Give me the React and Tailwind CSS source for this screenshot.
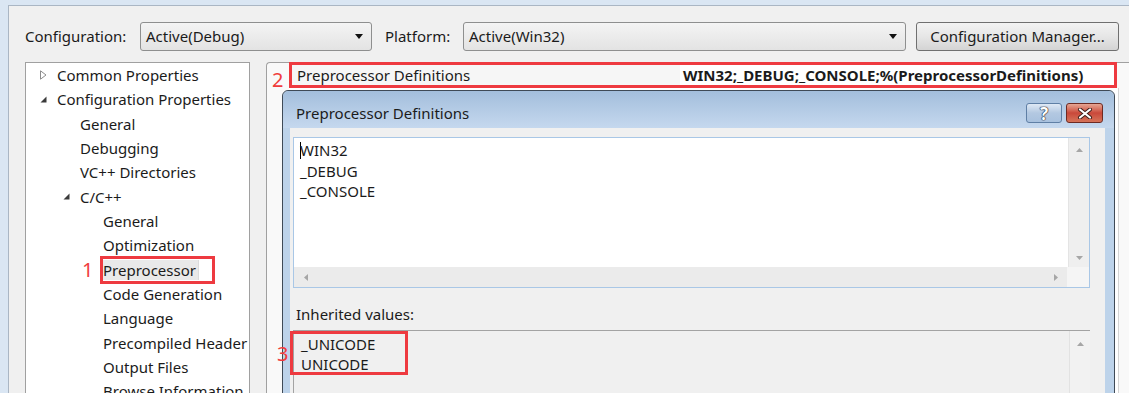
import React from 'react';

const tree = [
  { t: 'Common Properties', lvl: 0, icon: 'closed' },
  { t: 'Configuration Properties', lvl: 0, icon: 'open' },
  { t: 'General', lvl: 1 },
  { t: 'Debugging', lvl: 1 },
  { t: 'VC++ Directories', lvl: 1 },
  { t: 'C/C++', lvl: 1, icon: 'open' },
  { t: 'General', lvl: 2 },
  { t: 'Optimization', lvl: 2 },
  { t: 'Preprocessor', lvl: 2, sel: true },
  { t: 'Code Generation', lvl: 2 },
  { t: 'Language', lvl: 2 },
  { t: 'Precompiled Header', lvl: 2 },
  { t: 'Output Files', lvl: 2 },
  { t: 'Browse Information', lvl: 2 },
];

const indent = ['pl-[8px]', 'pl-[31px]', 'pl-[54px]'];

const Arrow = ({ dir }) => {
  const d = {
    up: 'M0 4 L3.5 0 L7 4 Z',
    down: 'M0 0 L7 0 L3.5 4 Z',
    left: 'M4 0 L4 7 L0 3.5 Z',
    right: 'M0 0 L4 3.5 L0 7 Z',
  }[dir];
  const vert = dir === 'up' || dir === 'down';
  return (
    <svg width={vert ? 7 : 4} height={vert ? 4 : 7} viewBox={vert ? '0 0 7 4' : '0 0 4 7'}>
      <path d={d} fill="#a6a6a6" />
    </svg>
  );
};

const Combo = ({ value, width }) => (
  <div
    className={`${width} h-[29px] flex items-center justify-between pl-[5px] pr-[8px] rounded-[3px] border border-[#8e8f8f] bg-gradient-to-b from-[#f4f4f4] to-[#e3e3e3]`}
  >
    <span>{value}</span>
    <svg width="8" height="5" viewBox="0 0 8 5">
      <path d="M0 0 L8 0 L4 5 Z" fill="#111" />
    </svg>
  </div>
);

const TreeIcon = ({ icon }) => {
  if (icon === 'closed')
    return (
      <svg width="7" height="10" viewBox="0 0 7 10">
        <path d="M0.5 0.8 L6 5 L0.5 9.2 Z" fill="none" stroke="#8c8c8c" />
      </svg>
    );
  if (icon === 'open')
    return (
      <svg width="7" height="7" viewBox="0 0 7 7">
        <path d="M6.5 0.5 L6.5 6.5 L0.5 6.5 Z" fill="#3a3a3a" />
      </svg>
    );
  return null;
};

const Red = 'border-[3px] border-[#ee3a40]';

export default function App() {
  return (
    <div className="w-[1129px] h-[393px] overflow-hidden bg-[#dae6f3] font-['Noto_Sans',sans-serif] text-[15px] text-[#1b1b1b]">
      <div className="ml-[8px] mt-[5px] h-[400px] bg-[#f0f0f0] border-l border-t border-[#aab6c4] flex flex-col">
        {/* toolbar */}
        <div className="mt-[16px] ml-[16px] h-[29px] flex items-center">
          <span className="w-[115px]">Configuration:</span>
          <Combo value="Active(Debug)" width="w-[232px]" />
          <span className="ml-[13px] w-[78px]">Platform:</span>
          <Combo value="Active(Win32)" width="w-[443px]" />
          <button className="ml-[10px] w-[203px] h-[29px] rounded-[3px] border border-[#707070] bg-gradient-to-b from-[#f3f3f3] via-[#e6e6e6] to-[#d4d4d4]">
            Configuration Manager...
          </button>
        </div>

        <div className="mt-[11px] flex flex-1">
          {/* tree */}
          <div className="relative ml-[16px] w-[225px] h-[340px] bg-white border border-[#a0a0a0]">
            {tree.map((it, i) => (
              <div key={i} className={`h-[24.35px] flex items-center ${indent[it.lvl]}`}>
                <div className="w-[23px] pl-[6px] flex items-center">
                  <TreeIcon icon={it.icon} />
                </div>
                {it.sel ? (
                  <span className="-ml-[1px] px-[1px] pr-[2px] bg-[#e9e9e9] border-r border-[#dcdcdc] leading-[20px]">
                    {it.t}
                  </span>
                ) : (
                  <span className="whitespace-nowrap">{it.t}</span>
                )}
              </div>
            ))}
            <div className={`absolute left-[74px] top-[193px] w-[115px] h-[28px] ${Red}`} />
            <span className="absolute left-[56px] top-[195px] text-[20px] leading-[24px] text-[#f03c3c]">1</span>
          </div>

          {/* property page */}
          <div className="relative ml-[16px] flex-1 h-[340px] bg-[#f9f9f9] border-l border-t border-[#a0a0a0] rounded-tl-[4px] flex flex-col">
            <div className="relative ml-[22px] -mt-[1px] w-[828px] h-[26px] flex">
              <div className="w-[391px] bg-[#f6f6f6] pl-[8px] flex items-center">Preprocessor Definitions</div>
              <div className="flex-1 bg-white pl-[3px] flex items-center font-bold whitespace-nowrap">
                WIN32;_DEBUG;_CONSOLE;%(PreprocessorDefinitions)
              </div>
              <div className={`absolute inset-0 ${Red}`} />
            </div>
            <div className="ml-[22px] w-[830px] flex-1 bg-white border-r border-[#d4d4d4]" />
            <span className="absolute left-[5px] top-[5px] text-[20px] leading-[24px] text-[#f03c3c]">2</span>

            {/* dialog */}
            <div className="absolute left-[15px] top-[27px] w-[833px] h-[320px] rounded-t-[6px] border border-[#3f4a56] bg-[#bdd3ea] flex flex-col">
              <div className="h-[37px] pt-[7px] pl-[13px] pr-[11px] flex items-center rounded-t-[6px] bg-gradient-to-b from-[#a3bedc] to-[#c5d8ee]">
                <span className="flex-1">Preprocessor Definitions</span>
                <div className="w-[36px] h-[20px] rounded-[3px] border border-[#5f7fa5] bg-gradient-to-b from-[#dfe9f5] via-[#b3c8e1] to-[#a8c1de] flex items-center justify-center">
                  <span className="text-white font-bold text-[17px] leading-none [text-shadow:0_0_1px_#112,0_0_1px_#112,0_0_1px_#112]">?</span>
                </div>
                <div className="ml-[4px] w-[37px] h-[20px] rounded-[3px] border border-[#6e2a22] bg-gradient-to-b from-[#e6a593] via-[#c9483a] to-[#d5735a] flex items-center justify-center">
                  <svg width="16" height="11" viewBox="0 0 16 11">
                    <path d="M3 1.5 L13 9.5 M13 1.5 L3 9.5" stroke="#3b1d19" strokeWidth="4" strokeLinecap="round" />
                    <path d="M3 1.5 L13 9.5 M13 1.5 L3 9.5" stroke="#fff" strokeWidth="2.2" strokeLinecap="round" />
                  </svg>
                </div>
              </div>

              <div className="ml-[7px] mr-[9px] flex-1 bg-[#f0f0f0] pt-[9px] pl-[3px] pr-[15px] flex flex-col">
                {/* edit box */}
                <div className="h-[151px] border border-[#a9c7e6] bg-white flex flex-col">
                  <div className="flex flex-1">
                    <div className="flex-1 pl-[6px] pt-[2px] leading-[20.5px]">
                      <div>
                        <span className="inline-block w-[1px] h-[17px] bg-black align-[-3px] -mr-[1px]" />
                        WIN32
                      </div>
                      <div>_DEBUG</div>
                      <div>_CONSOLE</div>
                    </div>
                    <div className="w-[21px] bg-[#efefef] border-l border-[#e4e4e4] flex flex-col items-center justify-between pt-[10px] pb-[7px]">
                      <Arrow dir="up" />
                      <Arrow dir="down" />
                    </div>
                  </div>
                  <div className="h-[20px] flex">
                    <div className="flex-1 bg-[#ebebeb] flex items-center justify-between pl-[10px] pr-[9px]">
                      <Arrow dir="left" />
                      <Arrow dir="right" />
                    </div>
                    <div className="w-[22px] bg-[#f5f5f5]" />
                  </div>
                </div>

                <div className="mt-[16px] h-[20px] leading-[20px] pl-[3px]">Inherited values:</div>

                <div className="relative mt-[6px] flex-1 border-t border-l border-[#a3a3a3] bg-[#f0f0f0] flex">
                  <div className="flex-1 pl-[7px] pt-[3px] leading-[20px]">
                    <div>_UNICODE</div>
                    <div>UNICODE</div>
                  </div>
                  <div className="w-[21px] border-l border-[#e2e2e2] bg-[#f2f2f2] flex flex-col items-center pt-[11px]">
                    <Arrow dir="up" />
                  </div>
                  <div className={`absolute -left-[4px] top-0 w-[118px] h-[44px] ${Red}`} />
                  <span className="absolute -left-[17px] top-[11px] text-[20px] leading-[24px] text-[#f03c3c]">3</span>
                </div>
              </div>
            </div>
          </div>
        </div>
      </div>
    </div>
  );
}
